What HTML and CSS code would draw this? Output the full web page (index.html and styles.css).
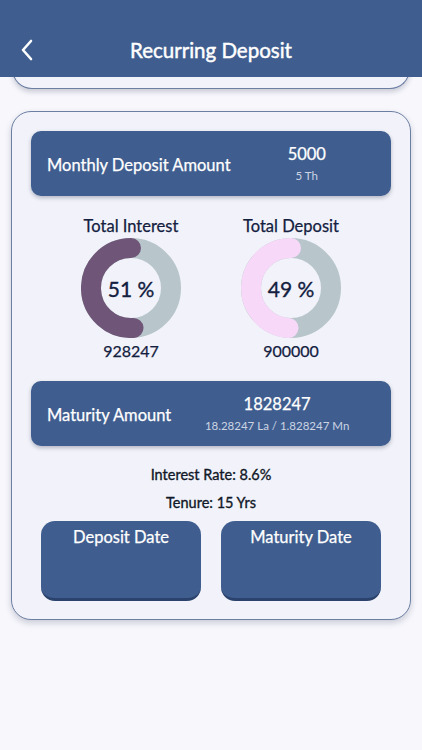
FILE: index.html
```html
<!DOCTYPE html>
<html lang="en">
<head>
<meta charset="utf-8">
<title>Recurring Deposit</title>
<link rel="stylesheet" href="styles.css">
</head>
<body>
<header class="header">
  <div class="title-row">
    <button class="back" aria-label="Back">
      <svg width="14" height="22" viewBox="0 0 14 22"><polyline points="11,2 3,11 11,20" fill="none" stroke="#ffffff" stroke-width="2.6" stroke-linecap="round" stroke-linejoin="round"/></svg>
    </button>
    <h1 class="title">Recurring Deposit</h1>
  </div>
</header>
<div class="prev-card"></div>
<main class="card">
  <section class="amount-box">
    <div class="amount-label">Monthly Deposit Amount</div>
    <div class="amount-value">
      <div class="amount-main">5000</div>
      <div class="amount-sub">5 Th</div>
    </div>
  </section>

  <section class="charts">
    <div class="chart">
      <div class="chart-title">Total Interest</div>
      <div class="donut">
        <svg width="100" height="100" viewBox="0 0 100 100">
          <circle cx="50" cy="50" r="40" fill="none" stroke="#b8c6cb" stroke-width="20"/>
          <path d="M50 10 A40 40 0 1 0 52.51 89.92" fill="none" stroke="#6f5577" stroke-width="20" stroke-linecap="round"/>
        </svg>
        <span class="donut-pct">51&#8239;%</span>
      </div>
      <div class="chart-value">928247</div>
    </div>
    <div class="chart">
      <div class="chart-title">Total Deposit</div>
      <div class="donut">
        <svg width="100" height="100" viewBox="0 0 100 100">
          <circle cx="50" cy="50" r="40" fill="none" stroke="#b8c6cb" stroke-width="20"/>
          <path d="M50 10 A40 40 0 0 0 47.49 89.92" fill="none" stroke="#f8d8f8" stroke-width="20" stroke-linecap="round"/>
        </svg>
        <span class="donut-pct">49&#8239;%</span>
      </div>
      <div class="chart-value">900000</div>
    </div>
  </section>

  <section class="amount-box">
    <div class="amount-label">Maturity Amount</div>
    <div class="amount-value">
      <div class="amount-main">1828247</div>
      <div class="amount-sub">18.28247 La / 1.828247 Mn</div>
    </div>
  </section>

  <div class="info">Interest Rate: 8.6%</div>
  <div class="info">Tenure: 15 Yrs</div>

  <section class="dates">
    <div class="date-box">Deposit Date</div>
    <div class="date-box">Maturity Date</div>
  </section>
</main>
</body>
</html>
```

FILE: styles.css
```css
* { box-sizing: border-box; }
html, body { margin: 0; padding: 0; }
body {
  background: #f7f7fc;
  font-family: Lato, "Open Sans", sans-serif;
  width: 422px;
  min-height: 750px;
}
.header {
  position: relative;
  z-index: 2;
  height: 77px;
  background: #3f5e8f;
  padding-top: 30px;
}
.title-row {
  position: relative;
  height: 40px;
  display: flex;
  align-items: center;
  justify-content: center;
}
.back {
  position: absolute;
  left: 20px;
  top: 9px;
  background: none;
  border: 0;
  padding: 0;
  width: 14px;
  height: 22px;
}
.back svg { display: block; }
.title {
  margin: 0;
  color: #ffffff;
  font-size: 20.5px;
  font-weight: 400;
  -webkit-text-stroke: 0.45px #ffffff;
}
.prev-card {
  position: relative;
  z-index: 1;
  margin: -20px 12px 0 12px;
  height: 32px;
  background: #f2f3fa;
  border: 1px solid #6c7fa3;
  border-top: 0;
  border-radius: 0 0 20px 20px;
  box-shadow: 0 3px 5px rgba(40, 50, 80, 0.22);
}
.card {
  margin: 22px 11px 0 11px;
  background: #f2f3fa;
  border: 1px solid #6c7fa3;
  border-radius: 20px;
  box-shadow: 0 3px 6px rgba(40, 50, 80, 0.22);
  padding: 19px 19px 18px 19px;
}
.amount-box {
  display: flex;
  align-items: center;
  background: #3f5e8f;
  border-radius: 10px;
  height: 65px;
  padding: 0 8px 0 16px;
  color: #ffffff;
  box-shadow: 0 2px 4px rgba(30, 40, 70, 0.3);
}
.amount-label {
  font-size: 16.5px;
  -webkit-text-stroke: 0.25px #ffffff;
  padding-top: 2px;
}
.amount-value {
  flex: 1;
  text-align: center;
}
.amount-main {
  font-size: 16.5px;
  -webkit-text-stroke: 0.25px #ffffff;
  line-height: 20px;
}
.amount-sub {
  font-size: 11.5px;
  line-height: 14px;
  margin-top: 5px;
  color: #ccd4e4;
}
.charts {
  display: flex;
  justify-content: center;
  margin-top: 21px;
  margin-bottom: 20px;
}
.chart {
  width: 160px;
  display: flex;
  flex-direction: column;
  align-items: center;
  color: #13203f;
  -webkit-text-stroke: 0.25px #13203f;
}
.chart-title {
  font-size: 16.5px;
  line-height: 19px;
}
.donut {
  position: relative;
  width: 100px;
  height: 100px;
  margin-top: 2px;
}
.donut svg { display: block; }
.donut-pct {
  position: absolute;
  left: 0;
  right: 0;
  top: 0;
  bottom: 0;
  display: flex;
  align-items: center;
  justify-content: center;
  font-size: 21px;
  -webkit-text-stroke: 0.35px #13203f;
}
.chart-value {
  font-size: 16px;
  line-height: 20px;
  margin-top: 3px;
}
.info {
  text-align: center;
  font-size: 14.5px;
  color: #111827;
  -webkit-text-stroke: 0.35px #111827;
  line-height: 18px;
  margin-top: 10px;
}
.amount-box + .info { margin-top: 20px; }
.dates {
  display: flex;
  justify-content: center;
  gap: 20px;
  margin-top: 9px;
}
.date-box {
  width: 160px;
  height: 80px;
  background: #3f5e8f;
  border-radius: 14px;
  border-bottom: 3px solid #2b436c;
  color: #ffffff;
  text-align: center;
  font-size: 16.5px;
  -webkit-text-stroke: 0.25px #ffffff;
  padding-top: 6px;
  line-height: 20px;
}
```
